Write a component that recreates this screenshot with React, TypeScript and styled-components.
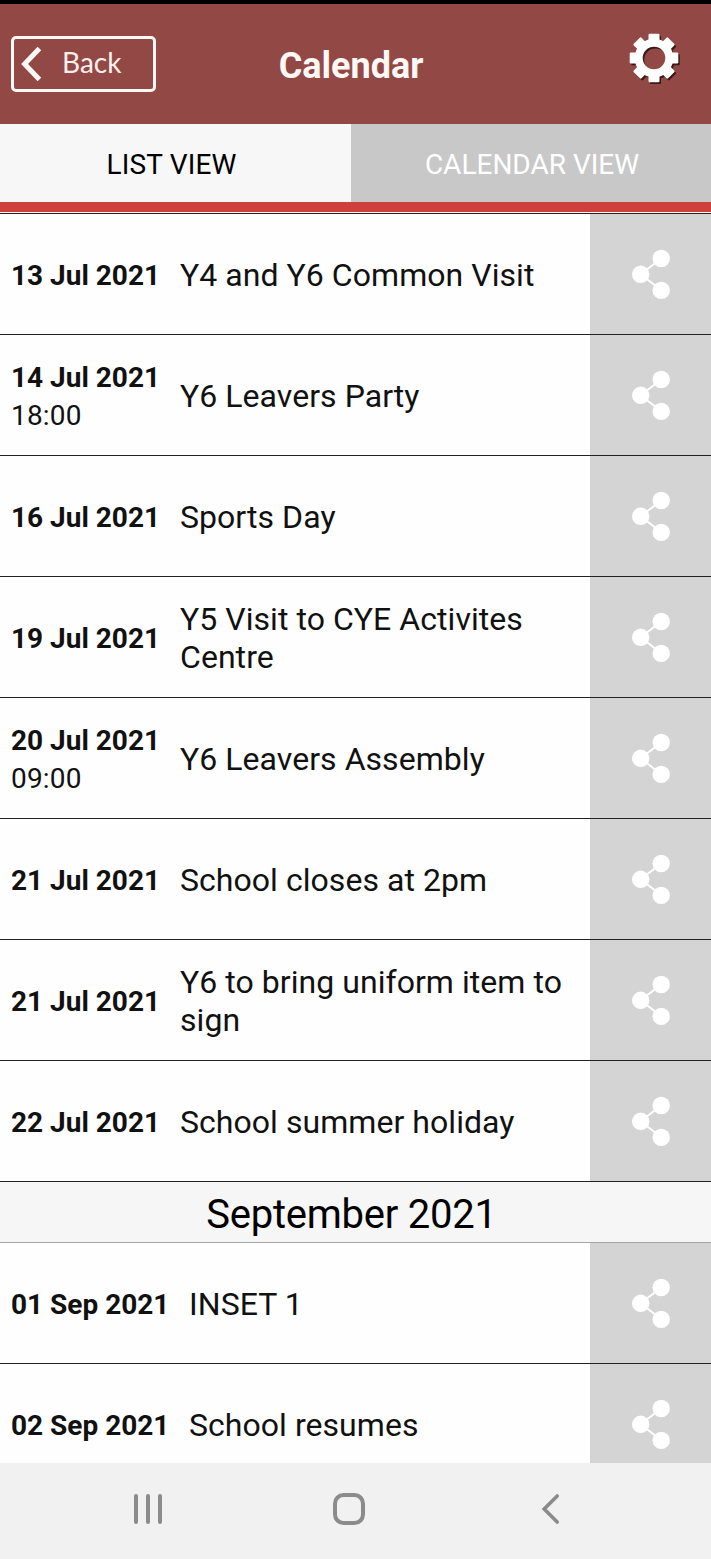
import React from "react";
import styled, { createGlobalStyle } from "styled-components";

const Global = createGlobalStyle`
  * { box-sizing: border-box; }
  body { margin: 0; background: #fff; font-family: Roboto, "Liberation Sans", sans-serif; }
`;

const Screen = styled.div`
  width: 711px;
  height: 1559px;
  display: flex;
  flex-direction: column;
  overflow: hidden;
  background: #fefefe;
`;

const StatusBar = styled.div`
  flex: none;
  height: 4px;
  background: #000;
`;

const Header = styled.header`
  flex: none;
  height: 120px;
  display: grid;
  grid-template-columns: 145px 1fr 145px;
  padding: 0 20px 0 11px;
  background: #924946;
  color: #fff8f5;
`;

const BackButton = styled.button`
  display: flex;
  align-items: center;
  width: 145px;
  height: 56px;
  margin: 32px 0 0;
  padding: 0 0 0 7px;
  border: 3px solid #fff8f5;
  border-radius: 5px;
  background: transparent;
  color: #fff0ec;
  font: 400 28px/50px Lato, sans-serif;
`;

const BackLabel = styled.span`
  margin: 0 0 4px 19px;
`;

const Title = styled.h1`
  margin: 0;
  padding: 40px 0 0 0;
  text-align: center;
  font-size: 36px;
  line-height: 44px;
  font-weight: 700;
`;

const SettingsButton = styled.div`
  display: flex;
  justify-content: flex-end;
  padding: 26px 9px 0 0;
`;

const Tabs = styled.nav`
  flex: none;
  display: grid;
  grid-template-columns: 351px 360px;
  height: 88px;
  border-bottom: 10px solid #cf403c;
`;

const Tab = styled.div<{ $active?: boolean }>`
  display: flex;
  align-items: center;
  justify-content: center;
  padding: ${(p) => (p.$active ? "2px 8px 0 0" : "2px 0 0 2px")};
  background: ${(p) => (p.$active ? "#f7f7f7" : "#c8c8c8")};
  color: ${(p) => (p.$active ? "#000" : "#fff")};
  font-size: 28px;
  letter-spacing: ${(p) => (p.$active ? "0.15px" : "0")};
`;

const List = styled.main`
  flex: none;
  height: 1250px;
  margin-top: 1px;
  overflow: hidden;
  border-top: 1px solid #3b1a1a;
`;

const Row = styled.div`
  display: flex;
  height: 121px;
  border-bottom: 1px solid #222;
  color: #111;
`;

const When = styled.div<{ $wide?: boolean }>`
  flex: none;
  display: flex;
  flex-direction: column;
  justify-content: center;
  width: ${(p) => (p.$wide ? 189 : 180)}px;
  padding: 4px 0 0 11px;
  line-height: 38px;
  font-size: 28px;
  white-space: nowrap;
`;

const DateText = styled.strong`
  font-weight: 700;
`;

const TimeText = styled.span`
  letter-spacing: 0.2px;
`;

const EventName = styled.div`
  flex: 1;
  display: flex;
  align-items: center;
  padding: 2px 20px 0 0;
  font-size: 32px;
  line-height: 38px;
  letter-spacing: 0.05px;
`;

const ShareCell = styled.div`
  flex: none;
  width: 121px;
  height: 121px;
  background: #d4d4d4;
  border-bottom: 1px solid #222;
`;

const Month = styled.h2`
  height: 61px;
  margin: 0;
  padding: 4px 8px 0 0;
  border-bottom: 1px solid #a4a4a4;
  background: #f6f6f6;
  color: #000;
  text-align: center;
  font-size: 40px;
  line-height: 58px;
  font-weight: 400;
  letter-spacing: -0.25px;
`;

const SystemBar = styled.footer`
  flex: 1;
  background: #f1f1f1;
  display: flex;
  align-items: center;
  justify-content: space-between;
  padding: 0 149px 4px 132px;
`;

const HomeIcon = styled.svg`
  margin-right: 6px;
`;

const BackIcon = () => (
  <svg width="22" height="36" viewBox="0 0 22 36">
    <path d="M18.4 2.5 3.6 18l14.8 15.5" fill="none" stroke="#fff8f5" strokeWidth="5" />
  </svg>
);

const teeth = [0, 45, 90, 135, 180, 225, 270, 315];

const GearShape = ({ color }: { color: string }) => (
  <g fill={color}>
    <circle r="15.3" fill="none" stroke={color} strokeWidth="8" />
    {teeth.map((a) => (
      <rect key={a} x="-5.5" y="-24.3" width="11" height="9" rx="1.2" transform={`rotate(${a})`} />
    ))}
  </g>
);

const GearIcon = () => (
  <svg width="56" height="56" viewBox="-28 -28 56 56">
    <g transform="translate(1.5 1.8)"><GearShape color="#3a1917" /></g>
    <GearShape color="#fff" />
  </svg>
);

const ShareIcon = () => (
  <svg width="121" height="120" viewBox="0 0 121 120">
    <path d="M71.2 44.5 50.7 60.3l20.5 16" fill="none" stroke="#fff" strokeWidth="2" />
    <g fill="#fff">
      <circle cx="71.2" cy="44.5" r="8.7" />
      <circle cx="50.7" cy="60.3" r="8.7" />
      <circle cx="71.2" cy="76.4" r="8.7" />
    </g>
  </svg>
);

type Item = { date: string; time?: string; name: string };

const july: Item[] = [
  { date: "13 Jul 2021", name: "Y4 and Y6 Common Visit" },
  { date: "14 Jul 2021", time: "18:00", name: "Y6 Leavers Party" },
  { date: "16 Jul 2021", name: "Sports Day" },
  { date: "19 Jul 2021", name: "Y5 Visit to CYE Activites Centre" },
  { date: "20 Jul 2021", time: "09:00", name: "Y6 Leavers Assembly" },
  { date: "21 Jul 2021", name: "School closes at 2pm" },
  { date: "21 Jul 2021", name: "Y6 to bring uniform item to sign" },
  { date: "22 Jul 2021", name: "School summer holiday" },
];

const september: Item[] = [
  { date: "01 Sep 2021", name: "INSET 1" },
  { date: "02 Sep 2021", name: "School resumes" },
];

const EventRow = ({ item, wide }: { item: Item; wide?: boolean }) => (
  <Row>
    <When $wide={wide}>
      <DateText>{item.date}</DateText>
      {item.time && <TimeText>{item.time}</TimeText>}
    </When>
    <EventName>{item.name}</EventName>
    <ShareCell><ShareIcon /></ShareCell>
  </Row>
);

export default function App() {
  return (
    <Screen>
      <Global />
      <StatusBar />
      <Header>
        <BackButton><BackIcon /><BackLabel>Back</BackLabel></BackButton>
        <Title>Calendar</Title>
        <SettingsButton><GearIcon /></SettingsButton>
      </Header>
      <Tabs>
        <Tab $active>LIST VIEW</Tab>
        <Tab>CALENDAR VIEW</Tab>
      </Tabs>
      <List>
        {july.map((item) => <EventRow key={item.name} item={item} />)}
        <Month>September 2021</Month>
        {september.map((item) => <EventRow key={item.name} item={item} wide />)}
      </List>
      <SystemBar>
        <svg width="32" height="32" viewBox="0 0 32 32">
          <path d="M4 3v26M16 3v26M28 3v26" stroke="#8b8b8b" strokeWidth="4" strokeLinecap="round" />
        </svg>
        <HomeIcon width="34" height="34" viewBox="0 0 34 34">
          <rect x="3" y="3" width="28" height="28" rx="8.5" fill="none" stroke="#8b8b8b" strokeWidth="4" />
        </HomeIcon>
        <svg width="22" height="32" viewBox="0 0 22 32">
          <path d="M17.2 3 4.2 16l13 13" fill="none" stroke="#8b8b8b" strokeWidth="3.6" strokeLinecap="round" />
        </svg>
      </SystemBar>
    </Screen>
  );
}
